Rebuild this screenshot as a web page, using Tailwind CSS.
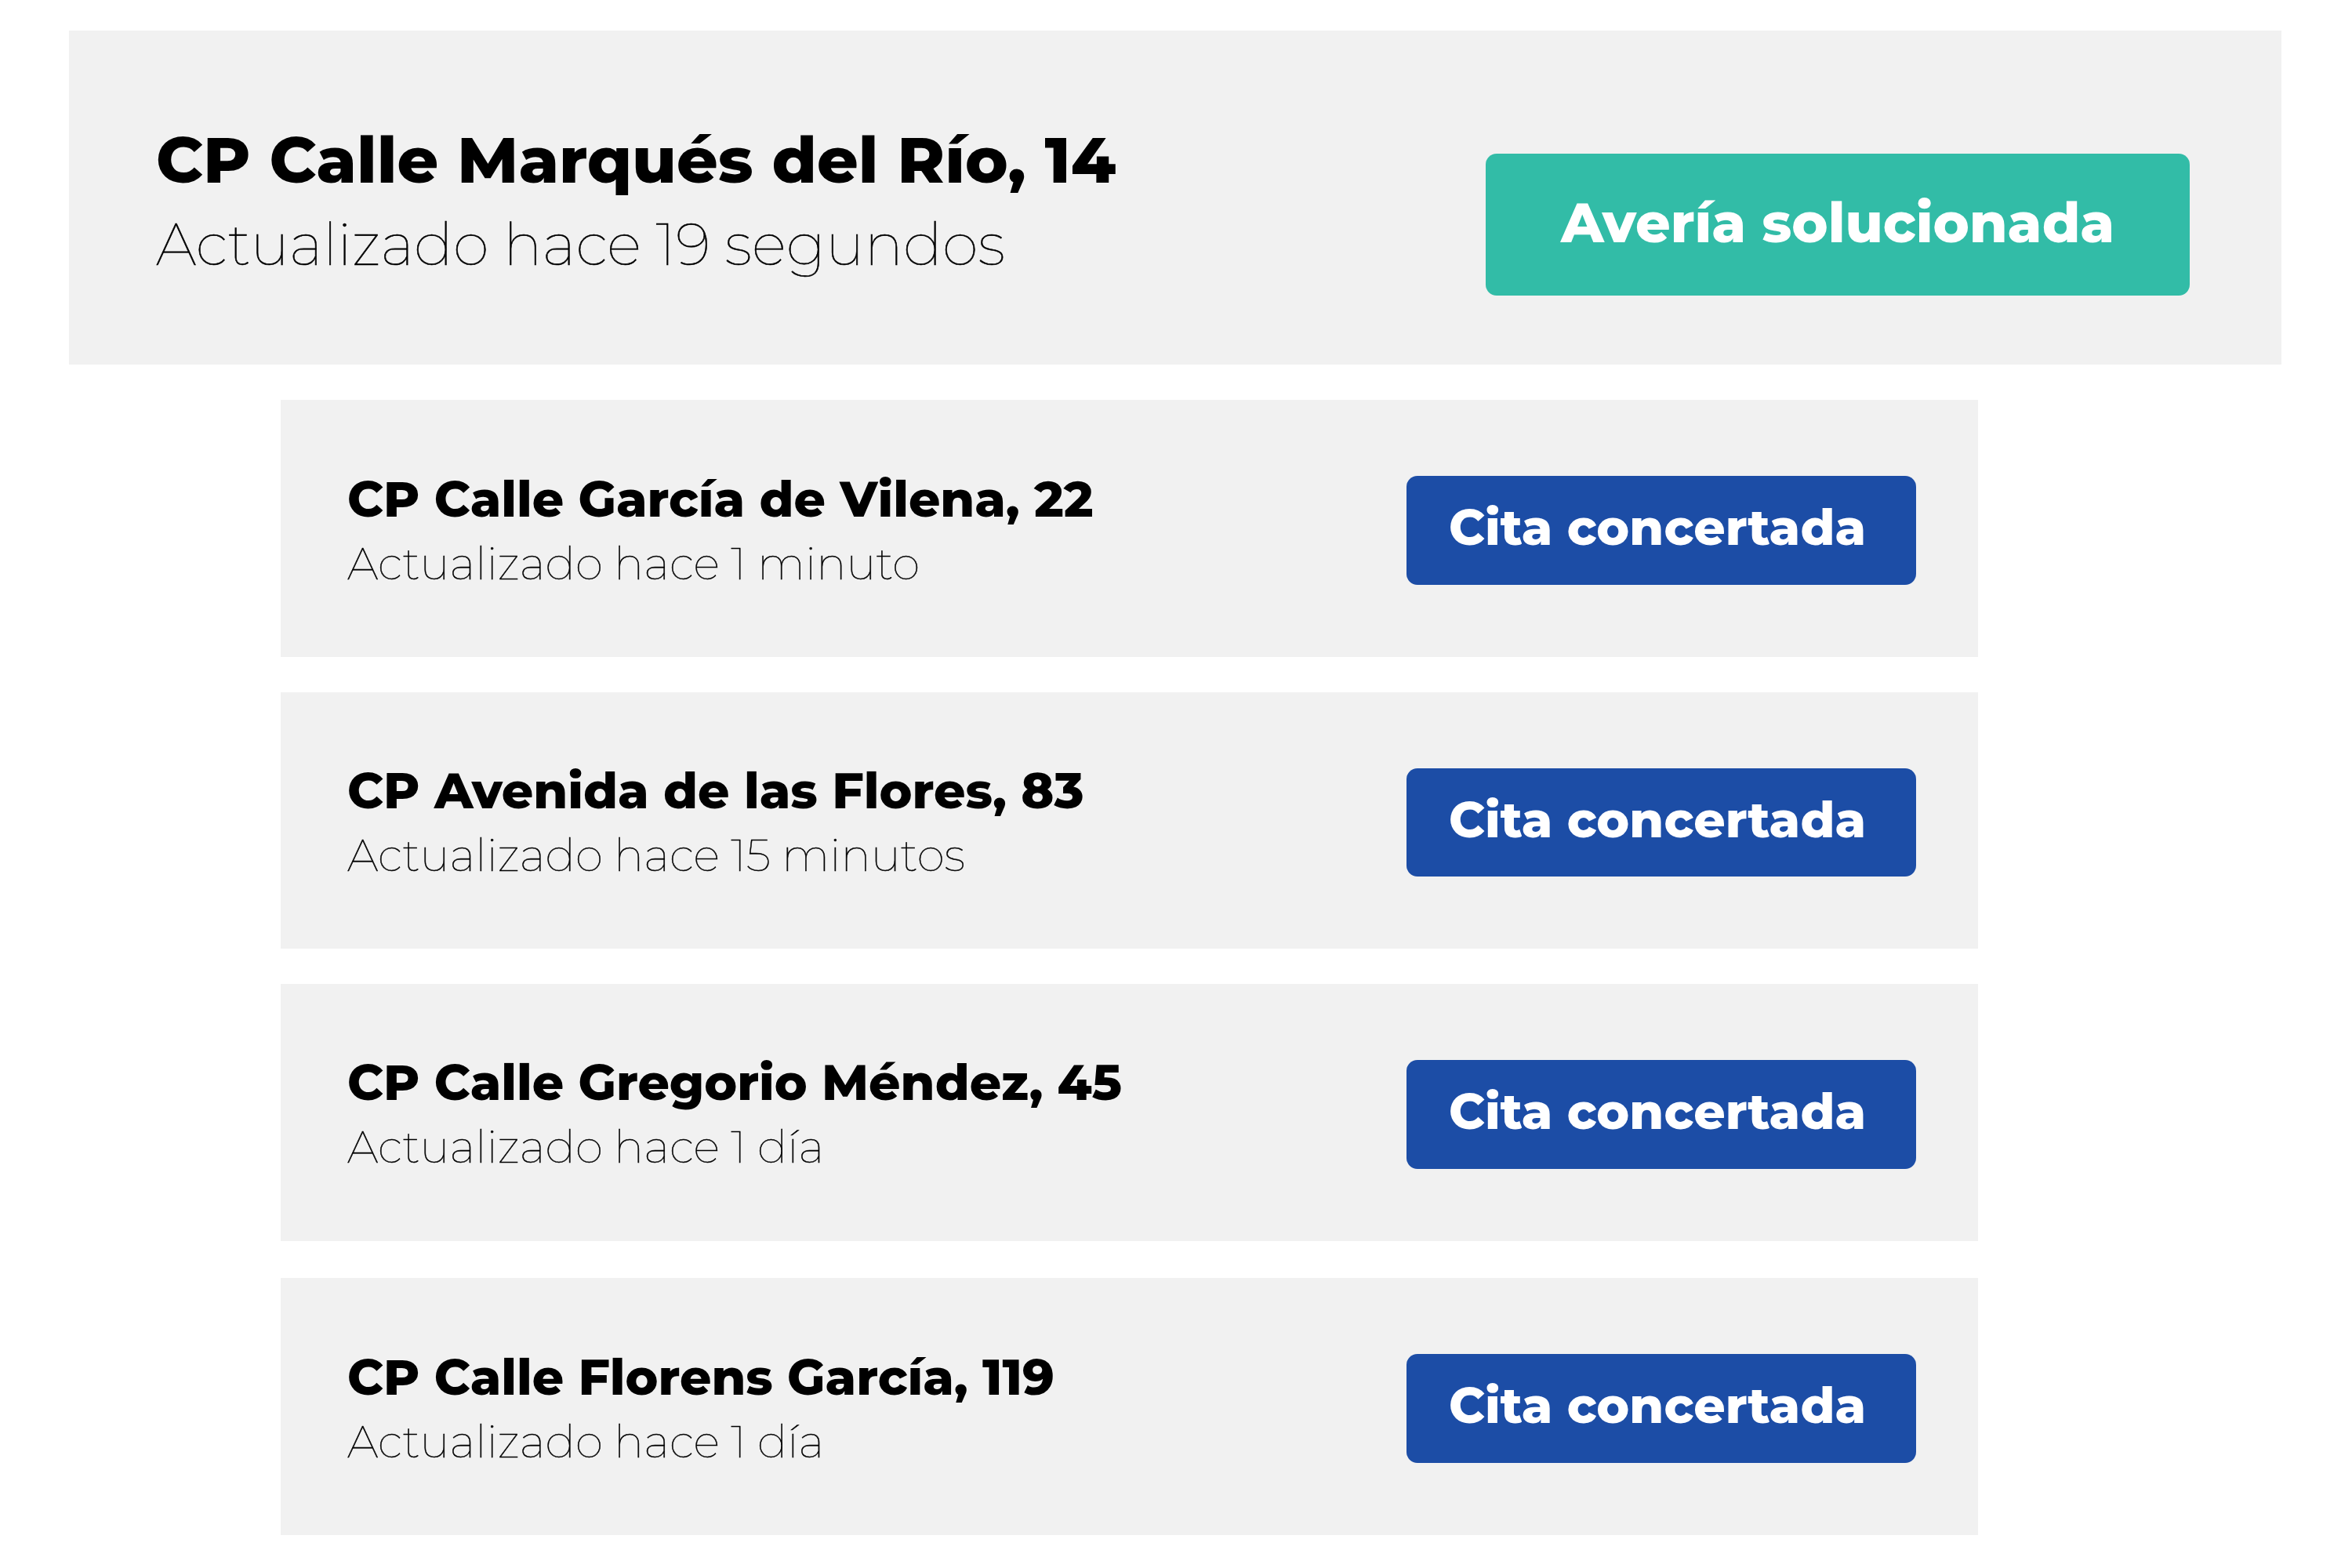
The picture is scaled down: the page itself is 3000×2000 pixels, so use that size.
<!DOCTYPE html>
<html lang="es">
  <head>
    <meta charset="UTF-8">
    <meta name="viewport" content="width=device-width, initial-scale=1.0">
    <script src="https://cdn.jsdelivr.net/npm/@tailwindcss/browser@4"></script>
    <title>Estado de averías</title>
  </head>
  <body class="bg-white text-black font-[Montserrat,'Open_Sans',sans-serif] whitespace-nowrap">
    <main class="w-[3000px] h-[2000px] pt-[39px] overflow-hidden">
      <!-- Aviso principal -->
      <section class="flex items-start justify-between ml-[88px] w-[2822px] h-[426px] pl-[111px] pr-[117px] bg-[#f1f1f1]">
        <div class="pt-[115px]">
          <h1 class="text-[82.2px] leading-[100px] font-extrabold">CP Calle Marqués del Río, 14</h1>
          <p class="mt-[13px] text-[74.4px] leading-[90px] font-thin [-webkit-text-stroke:0.6px_black]">Actualizado hace 19 segundos</p>
        </div>
        <div class="mt-[157px] w-[898px] h-[181px] pl-24 rounded-[14px] bg-[#32bca7] text-white text-[69.7px] leading-[176px] font-extrabold">Avería solucionada</div>
      </section>

      <!-- Resto de avisos -->
      <section class="flex flex-col gap-[45px] mt-[45px] ml-[358px] w-[2165px]">
        <div class="flex items-start justify-between h-[327.5px] pl-[85px] pr-[79px] bg-[#f1f1f1]">
          <div class="pt-[87px]">
            <h2 class="text-[63px] leading-[80px] font-extrabold">CP Calle García de Vilena, 22</h2>
            <p class="mt-[2px] text-[57.1px] leading-[80px] font-thin [-webkit-text-stroke:0.5px_black]">Actualizado hace 1 minuto</p>
          </div>
          <div class="mt-[97px] w-[650px] h-[138.5px] pl-[54px] rounded-[14px] bg-[#1c4da6] text-white text-[63px] leading-[132px] font-extrabold">Cita concertada</div>
        </div>
        <div class="flex items-start justify-between h-[327.5px] pl-[85px] pr-[79px] bg-[#f1f1f1]">
          <div class="pt-[86.5px]">
            <h2 class="text-[63.1px] leading-[80px] font-extrabold">CP Avenida de las Flores, 83</h2>
            <p class="mt-[2px] text-[57.1px] leading-[80px] font-thin [-webkit-text-stroke:0.5px_black]">Actualizado hace 15 minutos</p>
          </div>
          <div class="mt-[97px] w-[650px] h-[138.5px] pl-[54px] rounded-[14px] bg-[#1c4da6] text-white text-[63px] leading-[132px] font-extrabold">Cita concertada</div>
        </div>
        <div class="flex items-start justify-between h-[327.5px] pl-[85px] pr-[79px] bg-[#f1f1f1]">
          <div class="pt-[86px]">
            <h2 class="text-[63px] leading-[80px] font-extrabold">CP Calle Gregorio Méndez, 45</h2>
            <p class="mt-[2px] text-[57.1px] leading-[80px] font-thin [-webkit-text-stroke:0.5px_black]">Actualizado hace 1 día</p>
          </div>
          <div class="mt-[97px] w-[650px] h-[138.5px] pl-[54px] rounded-[14px] bg-[#1c4da6] text-white text-[63px] leading-[131px] font-extrabold">Cita concertada</div>
        </div>
        <div class="flex items-start justify-between mt-[2.5px] h-[327.5px] pl-[85px] pr-[79px] bg-[#f1f1f1]">
          <div class="pt-[87px]">
            <h2 class="text-[63px] leading-[80px] font-extrabold">CP Calle Florens García, 119</h2>
            <p class="mt-[2px] text-[57.1px] leading-[80px] font-thin [-webkit-text-stroke:0.5px_black]">Actualizado hace 1 día</p>
          </div>
          <div class="mt-[97px] w-[650px] h-[138.5px] pl-[54px] rounded-[14px] bg-[#1c4da6] text-white text-[63px] leading-[132px] font-extrabold">Cita concertada</div>
        </div>
      </section>
    </main>
  </body>
</html>
